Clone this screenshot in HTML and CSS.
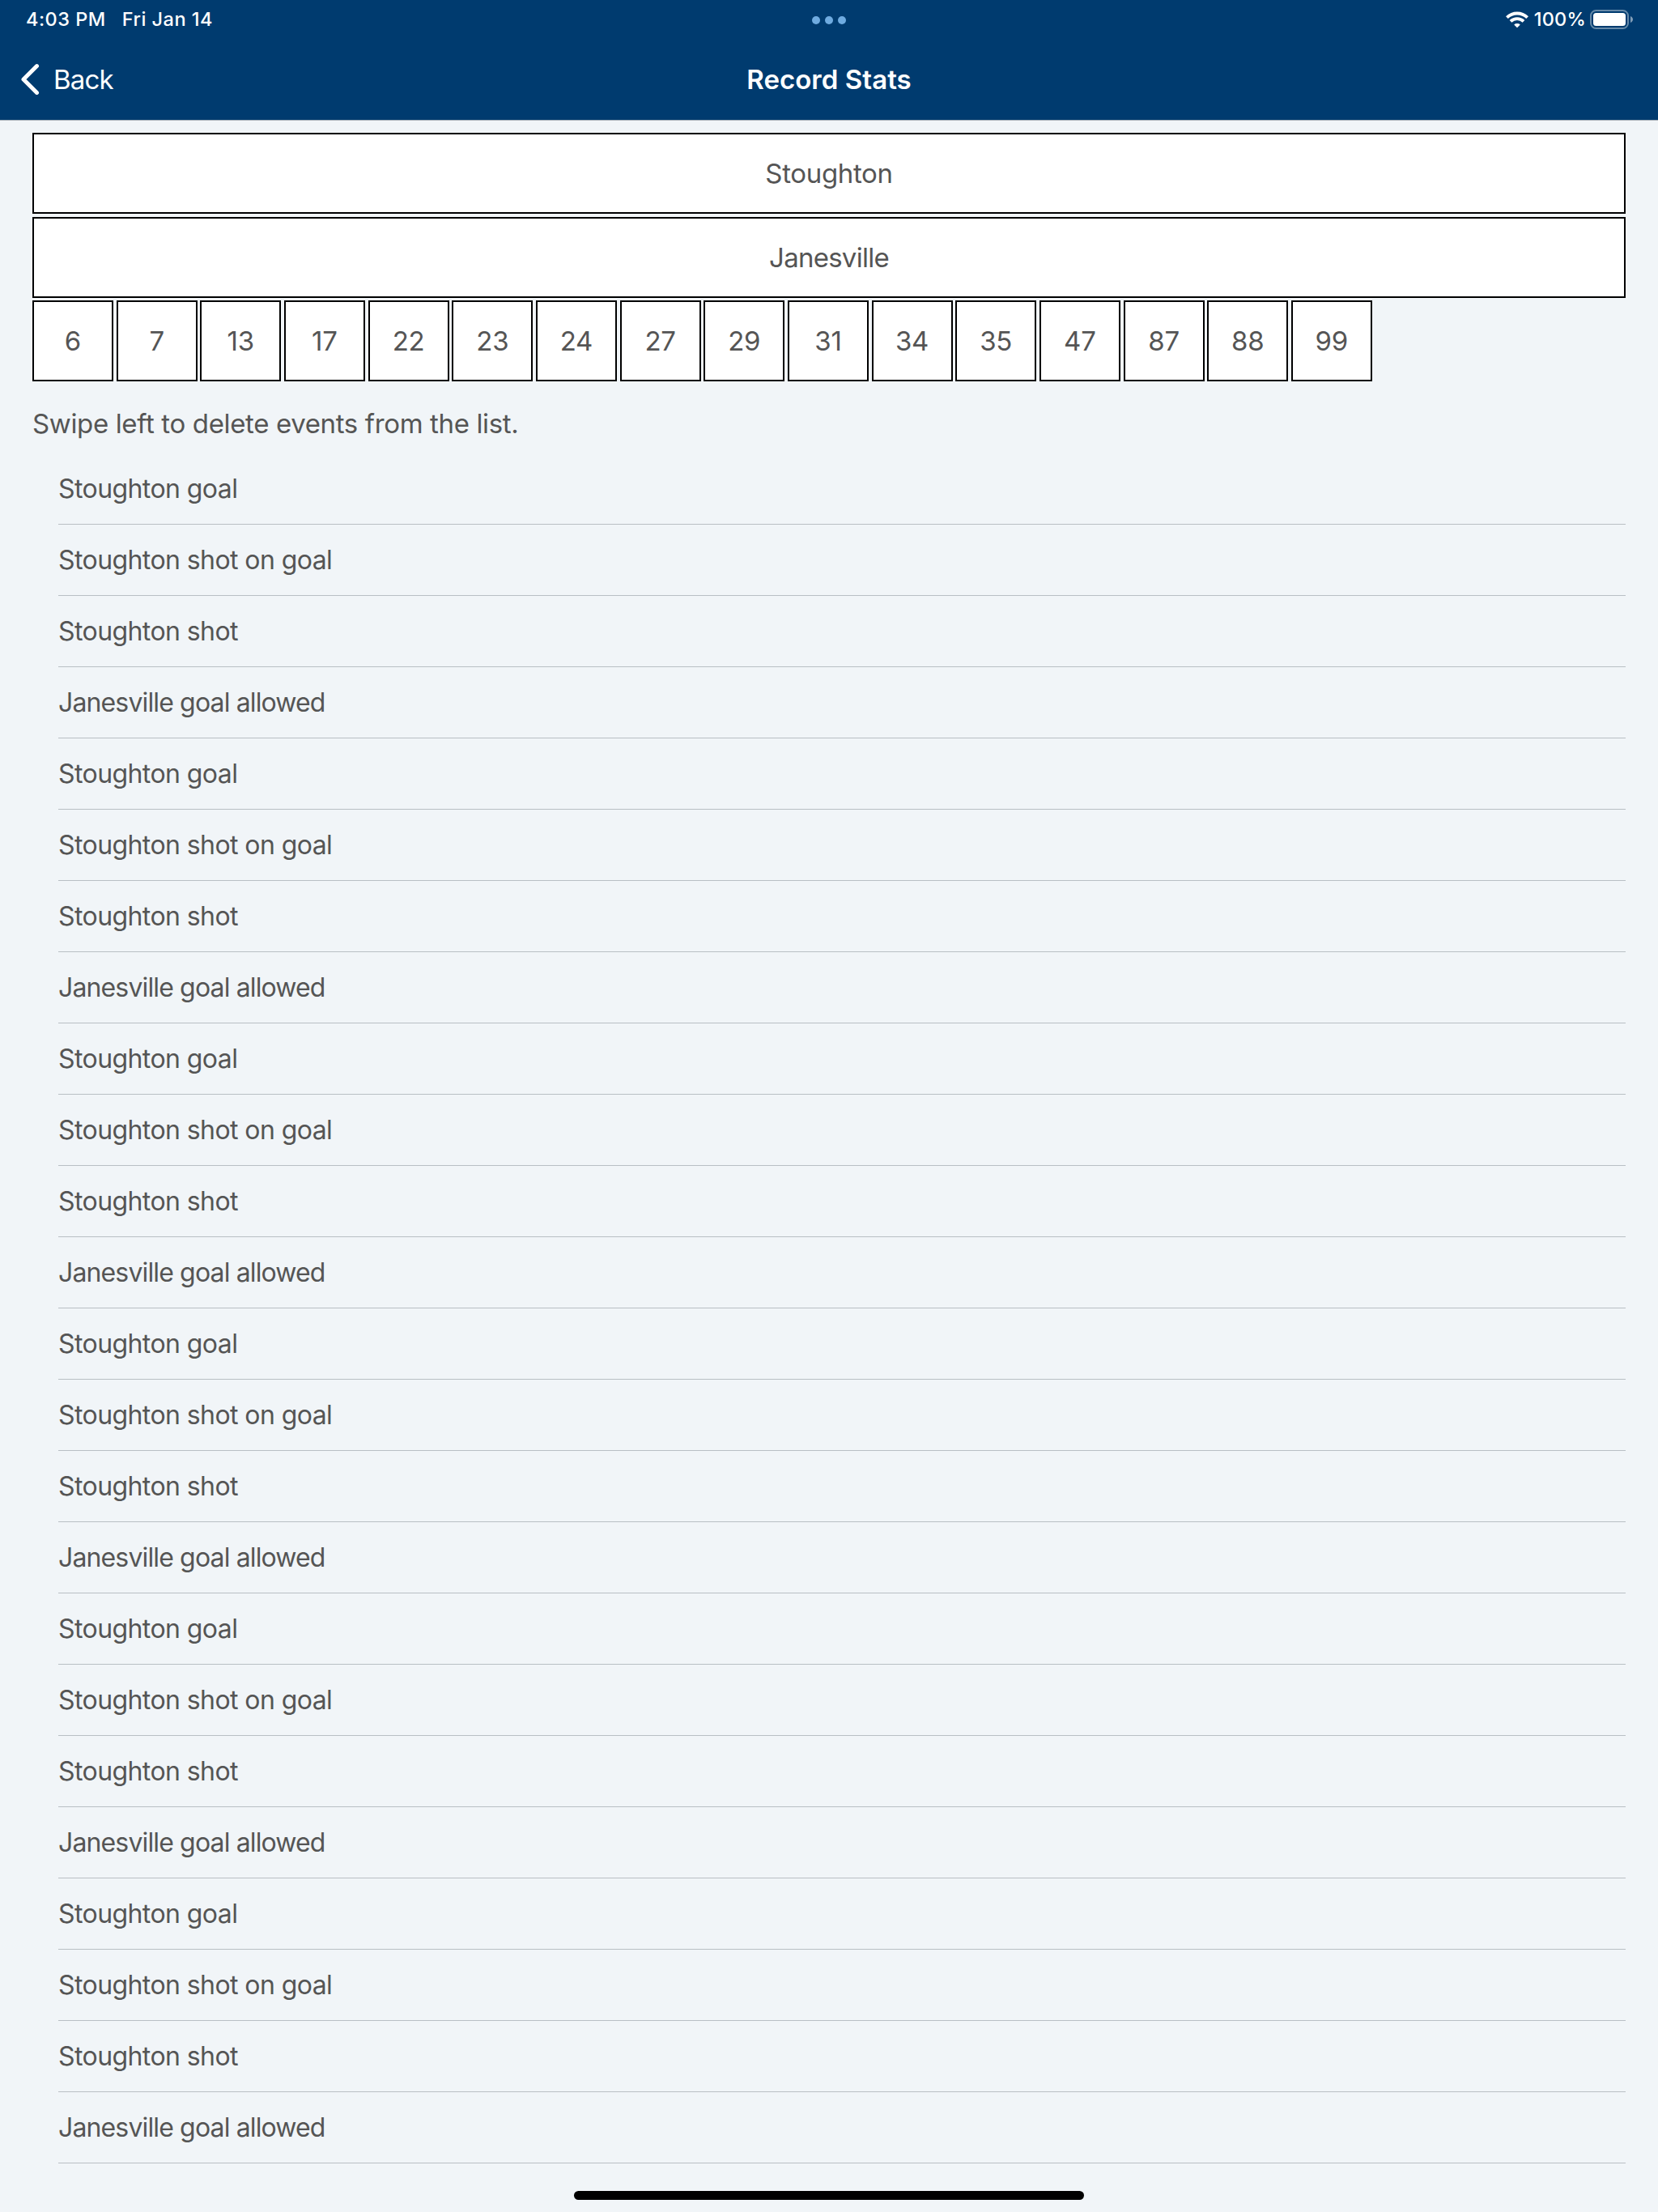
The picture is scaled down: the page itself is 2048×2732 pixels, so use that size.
FILE: index.html
```html
<!DOCTYPE html>
<html lang="en">
<head>
<meta charset="utf-8">
<title>Record Stats</title>
<link rel="stylesheet" href="styles.css">
</head>
<body>
<header class="header">
  <div class="status">
    <div class="status-left"><span class="time">4:03 PM</span><span class="date">Fri Jan 14</span></div>
    <div class="dots"><i class="dot"></i><i class="dot"></i><i class="dot"></i></div>
    <div class="status-right">
      <svg class="wifi" width="28" height="21" viewBox="0 0 28 21" fill="none" stroke="#fff" stroke-width="3.9"><path d="M1.4 7.6a18.2 18.2 0 0 1 25.2 0"/><path d="M6 12.3a11.6 11.6 0 0 1 16 0"/><path d="M14 20.2l-3.8-3.8a5.6 5.6 0 0 1 7.6 0z" fill="#fff" stroke="none"/></svg>
      <span class="percent">100%</span>
      <svg class="battery" width="54" height="24" viewBox="0 0 54 24"><rect x="1" y="1" width="46" height="22" rx="6.5" fill="none" stroke="#fff" stroke-opacity=".4" stroke-width="2"/><rect x="4" y="4" width="40" height="16" rx="3.5" fill="#fff"/><path d="M50 8c4 1.400 4 6.600 0 8z" fill="#fff" fill-opacity=".5"/></svg>
    </div>
  </div>
  <nav class="nav">
    <a class="back"><svg width="24" height="40" viewBox="0 0 24 40" fill="none" stroke="#fff" stroke-width="5" stroke-linecap="round" stroke-linejoin="round"><path d="M20.500 3.600 4 20l16.500 16.400"/></svg><span class="back-label">Back</span></a>
    <h1 class="title">Record Stats</h1>
  </nav>
</header>
<main class="content">
  <section class="picker">
    <button class="team home-team">Stoughton</button>
    <button class="team away-team">Janesville</button>
    <div class="numbers">
      <button class="number">6</button><button class="number">7</button><button class="number">13</button><button class="number">17</button><button class="number">22</button><button class="number">23</button><button class="number">24</button><button class="number">27</button><button class="number">29</button><button class="number">31</button><button class="number">34</button><button class="number">35</button><button class="number">47</button><button class="number">87</button><button class="number">88</button><button class="number">99</button>
    </div>
  </section>
  <p class="hint">Swipe left to delete events from the list.</p>
  <ul class="events">
    <li>Stoughton goal</li><li>Stoughton shot on goal</li><li>Stoughton shot</li><li class="allowed">Janesville goal allowed</li>
    <li>Stoughton goal</li><li>Stoughton shot on goal</li><li>Stoughton shot</li><li class="allowed">Janesville goal allowed</li>
    <li>Stoughton goal</li><li>Stoughton shot on goal</li><li>Stoughton shot</li><li class="allowed">Janesville goal allowed</li>
    <li>Stoughton goal</li><li>Stoughton shot on goal</li><li>Stoughton shot</li><li class="allowed">Janesville goal allowed</li>
    <li>Stoughton goal</li><li>Stoughton shot on goal</li><li>Stoughton shot</li><li class="allowed">Janesville goal allowed</li>
    <li>Stoughton goal</li><li>Stoughton shot on goal</li><li>Stoughton shot</li><li class="allowed">Janesville goal allowed</li>
  </ul>
</main>
<footer class="home"><div class="home-bar"></div></footer>
</body>
</html>
```
FILE: styles.css
```css
* { box-sizing: border-box; }
body {
  margin: 0;
  height: 2732px;
  overflow: hidden;
  background: #f1f5f8;
  color: #555;
  font-family: Inter, "Liberation Sans", sans-serif;
  font-size: 33px;
}
.header {
  height: 149px;
  background: #003b6f;
  border-bottom: 1px solid #a7b0b8;
  color: #fff;
}
.status {
  display: grid;
  grid-template-columns: 1fr auto 1fr;
  align-items: center;
  height: 48px;
  padding: 0 30px 0 32px;
  font-size: 23.5px;
  font-weight: 450;
  letter-spacing: .5px;
  line-height: 48px;
}
.status-left { display: flex; gap: 20px; }
.dots { display: flex; gap: 6px; padding-top: 2px; margin-left: -2px; }
.dot { width: 10px; height: 10px; border-radius: 50%; background: #6fabe0; }
.status-right { display: flex; justify-content: flex-end; align-items: center; }
.percent { margin: 0 5px 0 7px; letter-spacing: .2px; }
.nav {
  display: grid;
  grid-template-columns: 1fr auto 1fr;
  align-items: center;
  height: 100px;
  padding: 0 25px;
}
.back { display: flex; align-items: center; gap: 17px; letter-spacing: -.8px; }
.title { margin: 0; font-size: 33px; font-weight: 600; letter-spacing: .05px; }
.content { padding: 15px 40px 0; }
.picker { display: flex; flex-direction: column; gap: 3.67px; }
.team, .number {
  height: 100px;
  padding: 0;
  border: 2px solid #000;
  border-radius: 0;
  background: #fff;
  color: inherit;
  font: inherit;
}
.home-team { letter-spacing: -.35px; }
.away-team { letter-spacing: -.75px; }
.numbers { display: flex; gap: 3.67px; }
.number { width: 100px; letter-spacing: -.2px; }
.hint { margin: 21.660px 0 7px; line-height: 60px; letter-spacing: -.36px; }
.events { margin: 0; padding: 0 0 0 32px; list-style: none; font-size: 32px; letter-spacing: -.58px; }
.events li { height: 88px; border-bottom: 1px solid #b9bfc4; line-height: 88px; }
.events .allowed { letter-spacing: -.86px; }
.home { display: flex; justify-content: center; padding-top: 34px; }
.home-bar { width: 630px; height: 11px; border-radius: 6px; background: #000; }
```
